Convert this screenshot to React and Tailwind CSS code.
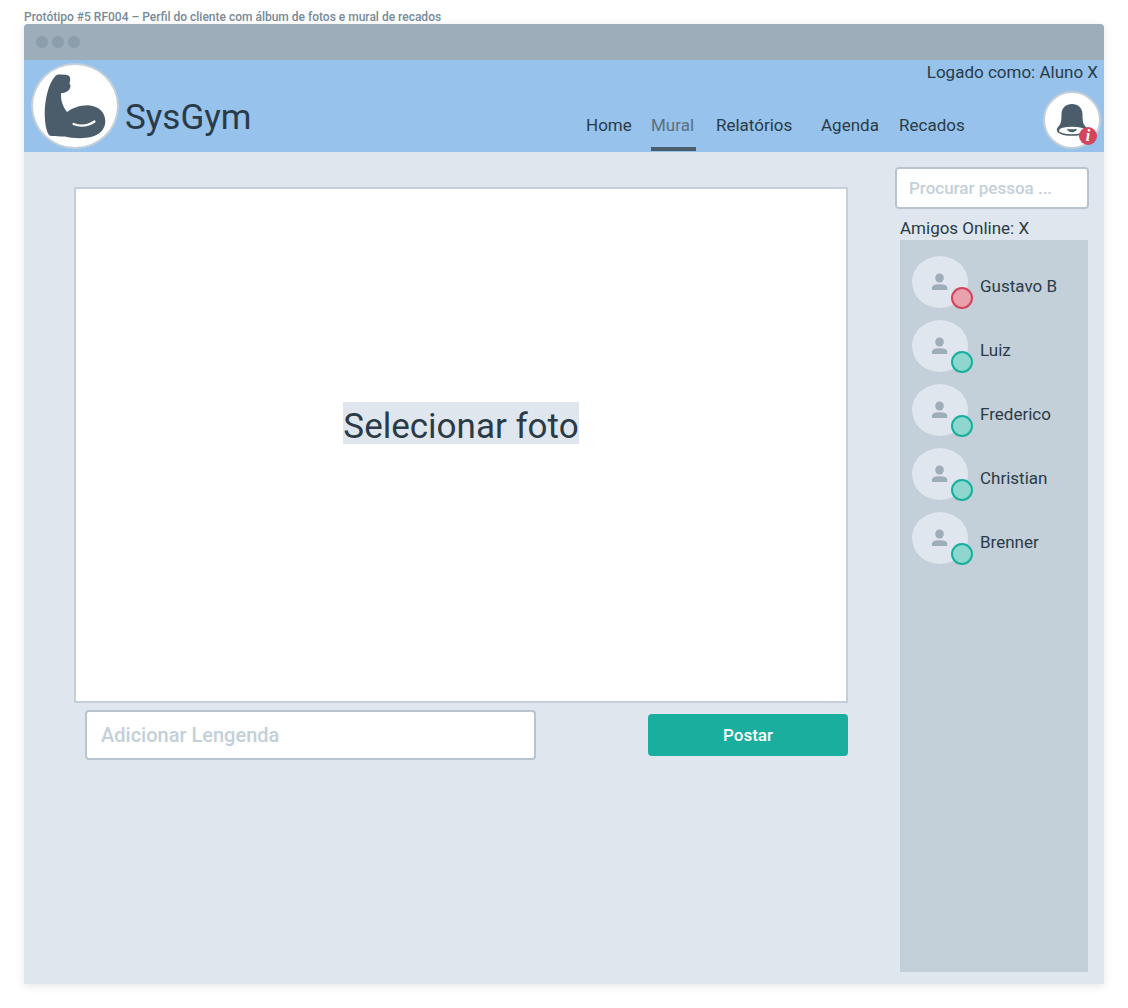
import React from "react";

const navItems = [
  { label: "Home" },
  { label: "Mural", active: true },
  { label: "Relatórios" },
  { label: "Agenda" },
  { label: "Recados" },
];

const friends = [
  { name: "Gustavo B", online: false },
  { name: "Luiz", online: true },
  { name: "Frederico", online: true },
  { name: "Christian", online: true },
  { name: "Brenner", online: true },
];

function ArmIcon() {
  return (
    <svg viewBox="0 0 62 66" className="h-[66px] w-[62px]" aria-hidden="true">
      <path
        fill="#4b5d6b"
        d="M11 3.500C12 2 13.500 1.600 15.500 1.600L22 1.700C25 2 26.500 3.800 26.200 6.500C26.400 8 25.500 9 25.400 10.500C26.400 11.500 26.700 13 26.200 14.500C25.500 17.500 22 20 17 20.200C16.800 27.500 18.500 33 23 39C28 35 36 32.100 44 32.200C54 32.600 61.500 39 61.300 48.500C61.200 58 53 65.200 36 65.200C30 65.200 25 64.700 21 63.500C16 63.400 11 63.600 6 62.800C2.500 60.500 .8 50.500 .7 40.500C.7 27 4.500 10 11 3.500Z"
      />
      <path d="M29.500 51C36 53.600 44 52.800 50.500 48.500" fill="none" stroke="#fff" strokeWidth="2.200" strokeLinecap="round" />
    </svg>
  );
}

function BellIcon() {
  return (
    <svg viewBox="0 0 32 34" className="h-[34px] w-8" aria-hidden="true">
      <path
        fill="#4b5d6b"
        d="M16 1C22 1 26.500 5 26.500 11C26.500 18 27 21 29.500 23.500C30.700 24.700 31.200 25.800 31.200 27C31.200 30.500 24.500 32.800 16 32.800C7.500 32.800 .8 30.500 .8 27C.8 25.800 1.300 24.700 2.500 23.500C5 21 5.500 18 5.500 11C5.500 5 10 1 16 1Z"
      />
      <ellipse cx="16" cy="27.500" rx="13" ry="3.800" fill="#fff" />
      <path fill="#4b5d6b" d="M11 25.800Q16 26.800 21 25.800C20.500 27.800 18.500 29.300 16 29.300C13.500 29.300 11.500 27.800 11 25.800Z" />
    </svg>
  );
}

function PersonIcon() {
  return (
    <svg viewBox="0 0 16 18" className="h-[18px] w-4" fill="#9dadb9" aria-hidden="true">
      <ellipse cx="7.500" cy="5" rx="4.300" ry="4.600" />
      <path d="M-.2 17V15C-.2 12.300 3 11.300 7.500 11.300S15.300 12.300 15.300 15V17Z" />
    </svg>
  );
}

function Friend({ name, online }) {
  return (
    <li className="flex items-center gap-3">
      <div className="relative flex h-[52px] w-14 items-center justify-center rounded-[50%] bg-[#dfe6ee]">
        <PersonIcon />
        <span
          role="img"
          aria-label={online ? "Online" : "Ocupado"}
          className={
            online
              ? "absolute -right-[5px] -bottom-px size-[22px] rounded-full border-2 border-[#1aae9f] bg-[#8dd7cf]"
              : "absolute -right-[5px] -bottom-px size-[22px] rounded-full border-2 border-[#d3455b] bg-[#e9a2ad]"
          }
        />
      </div>
      <span className="pt-2">{name}</span>
    </li>
  );
}

function Header() {
  return (
    <header className="flex h-[92px] justify-between bg-[#96c2eb] pl-[7px]">
      <div className="flex items-center gap-1.5">
        <div className="flex h-[86px] w-[88px] items-center justify-center rounded-[50%] border-2 border-[#c3cfd9] bg-white">
          <ArmIcon />
        </div>
        <h1 className="pt-6 text-[35px] leading-10">SysGym</h1>
      </div>
      <div className="flex flex-col justify-between">
        <p className="pr-1.5 text-right">Logado como: Aluno X</p>
        <div className="flex items-end gap-[78px] pr-[3px]">
          <nav className="grid grid-cols-[45px_45px_85px_58px_66px] gap-5 pb-px">
            {navItems.map(({ label, active }) => (
              <a
                key={label}
                href="#"
                aria-current={active ? "page" : undefined}
                className={
                  active
                    ? "border-b-4 border-[#4b5d6b] pb-2.5 text-[#5b6f7f]"
                    : "border-b-4 border-transparent pb-2.5"
                }
              >
                {label}
              </a>
            ))}
          </nav>
          <button
            type="button"
            aria-label="Notificações"
            className="relative mb-[3px] flex size-[58px] items-center justify-center rounded-full border-2 border-[#c3cfd9] bg-white"
          >
            <BellIcon />
            <span className="absolute right-0.5 bottom-0.5 flex size-[18px] items-center justify-center rounded-full bg-[#d3455b] font-['Liberation_Serif',serif] text-base leading-none font-bold text-white italic">
              i
            </span>
          </button>
        </div>
      </div>
    </header>
  );
}

export default function App() {
  return (
    <div className="flex min-h-screen flex-col bg-white px-6 pb-6 font-['Roboto',sans-serif] text-[17px] leading-6 text-[#2a3b47]">
      <p className="pt-2.5 text-xs leading-[14px] font-medium text-[#778a99]">
        Protótipo #5 RF004 – Perfil do cliente com álbum de fotos e mural de recados
      </p>
      <div className="flex flex-1 flex-col overflow-hidden rounded-t bg-[#dfe6ee] shadow-[0_2px_10px_rgba(0,0,0,0.1)]">
        <div className="flex h-9 items-center gap-1 bg-[#9dadb9] px-3">
          <span className="size-3 rounded-full bg-[#8c9dab]" />
          <span className="size-3 rounded-full bg-[#8c9dab]" />
          <span className="size-3 rounded-full bg-[#8c9dab]" />
        </div>
        <Header />
        <div className="flex flex-1 gap-[47px] pr-[15px] pl-[50px]">
          <main className="flex-1 pt-[35px]">
            <div className="flex aspect-[3/2] items-center justify-center border-2 border-[#c3cfd9] bg-white pb-11">
              <button type="button" className="bg-[#dfe6ee] pt-2 text-[35px] leading-[34px]">
                Selecionar foto
              </button>
            </div>
            <form className="flex items-center justify-between pt-[7px] pl-[11px]">
              <input
                type="text"
                aria-label="Adicionar Lengenda"
                placeholder="Adicionar Lengenda"
                className="h-[50px] w-[451px] rounded border-2 border-[#b8c4d0] bg-white px-3.5 text-xl font-medium placeholder:text-[#c3cfd9]"
              />
              <button type="button" className="h-[42px] w-[200px] rounded bg-[#1aae9f] font-medium text-white">
                Postar
              </button>
            </form>
          </main>
          <aside className="flex w-[194px] flex-col pt-[15px] pb-3">
            <input
              type="search"
              aria-label="Procurar pessoa"
              placeholder="Procurar pessoa ..."
              className="h-[42px] w-full rounded border-2 border-[#b8c4d0] bg-white px-3 font-medium placeholder:text-[#c3cfd9]"
            />
            <h2 className="pt-[7px] pl-[5px]">Amigos Online: X</h2>
            <ul className="mr-px ml-[5px] flex flex-1 flex-col gap-3 bg-[#c3cfd9] p-3 pt-4">
              {friends.map((friend) => (
                <Friend key={friend.name} {...friend} />
              ))}
            </ul>
          </aside>
        </div>
      </div>
    </div>
  );
}
